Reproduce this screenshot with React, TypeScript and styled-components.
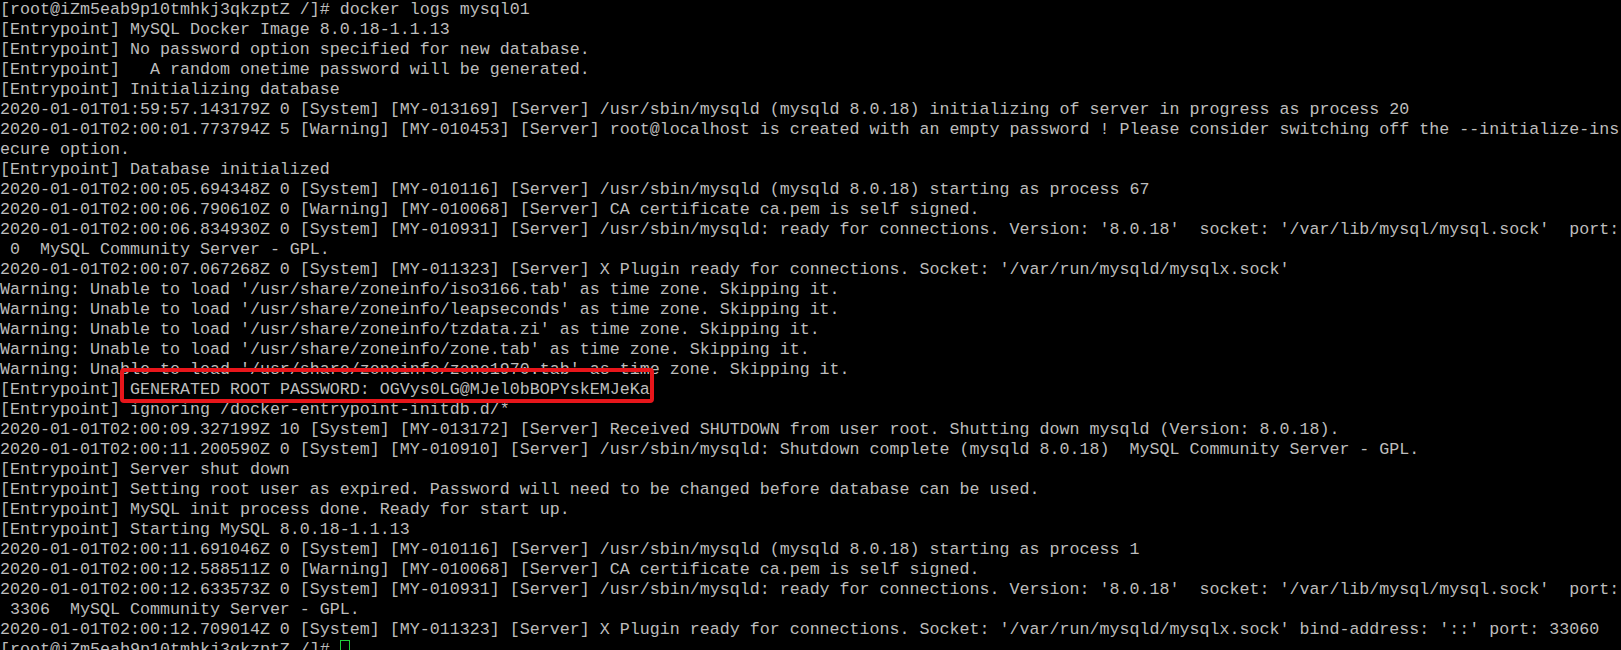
import React from "react";
import styled, { createGlobalStyle } from "styled-components";

const Global = createGlobalStyle`
  html, body { margin: 0; padding: 0; background: #000; }
  body { overflow: hidden; }
`;

const Terminal = styled.div`
  width: 1621px;
  height: 650px;
  overflow: hidden;
  background: #000;
  color: #bdbdbd;
  font-family: "Liberation Mono", "Courier New", monospace;
  font-size: 16.664px;
  line-height: 20px;
  display: flex;
  flex-direction: column;
`;

const Line = styled.div`
  height: 20px;
  flex: 0 0 20px;
  white-space: pre;
`;

const Highlight = styled.span`
  position: relative;
  &::before {
    content: "";
    position: absolute;
    left: -10px;
    right: -4px;
    top: -12px;
    bottom: -4px;
    border: 4px solid #e8161b;
    border-radius: 4px;
    pointer-events: none;
  }
`;

const Cursor = styled.span`
  display: inline-block;
  width: 8px;
  height: 16px;
  border: 1px solid #1fcf3a;
  vertical-align: top;
`;

const lines: string[] = [
  "[root@iZm5eab9p10tmhkj3qkzptZ /]# docker logs mysql01",
  "[Entrypoint] MySQL Docker Image 8.0.18-1.1.13",
  "[Entrypoint] No password option specified for new database.",
  "[Entrypoint]   A random onetime password will be generated.",
  "[Entrypoint] Initializing database",
  "2020-01-01T01:59:57.143179Z 0 [System] [MY-013169] [Server] /usr/sbin/mysqld (mysqld 8.0.18) initializing of server in progress as process 20",
  "2020-01-01T02:00:01.773794Z 5 [Warning] [MY-010453] [Server] root@localhost is created with an empty password ! Please consider switching off the --initialize-ins",
  "ecure option.",
  "[Entrypoint] Database initialized",
  "2020-01-01T02:00:05.694348Z 0 [System] [MY-010116] [Server] /usr/sbin/mysqld (mysqld 8.0.18) starting as process 67",
  "2020-01-01T02:00:06.790610Z 0 [Warning] [MY-010068] [Server] CA certificate ca.pem is self signed.",
  "2020-01-01T02:00:06.834930Z 0 [System] [MY-010931] [Server] /usr/sbin/mysqld: ready for connections. Version: '8.0.18'  socket: '/var/lib/mysql/mysql.sock'  port:",
  " 0  MySQL Community Server - GPL.",
  "2020-01-01T02:00:07.067268Z 0 [System] [MY-011323] [Server] X Plugin ready for connections. Socket: '/var/run/mysqld/mysqlx.sock'",
  "Warning: Unable to load '/usr/share/zoneinfo/iso3166.tab' as time zone. Skipping it.",
  "Warning: Unable to load '/usr/share/zoneinfo/leapseconds' as time zone. Skipping it.",
  "Warning: Unable to load '/usr/share/zoneinfo/tzdata.zi' as time zone. Skipping it.",
  "Warning: Unable to load '/usr/share/zoneinfo/zone.tab' as time zone. Skipping it.",
  "Warning: Unable to load '/usr/share/zoneinfo/zone1970.tab' as time zone. Skipping it.",
  "__PASSWORD__",
  "[Entrypoint] ignoring /docker-entrypoint-initdb.d/*",
  "2020-01-01T02:00:09.327199Z 10 [System] [MY-013172] [Server] Received SHUTDOWN from user root. Shutting down mysqld (Version: 8.0.18).",
  "2020-01-01T02:00:11.200590Z 0 [System] [MY-010910] [Server] /usr/sbin/mysqld: Shutdown complete (mysqld 8.0.18)  MySQL Community Server - GPL.",
  "[Entrypoint] Server shut down",
  "[Entrypoint] Setting root user as expired. Password will need to be changed before database can be used.",
  "[Entrypoint] MySQL init process done. Ready for start up.",
  "[Entrypoint] Starting MySQL 8.0.18-1.1.13",
  "2020-01-01T02:00:11.691046Z 0 [System] [MY-010116] [Server] /usr/sbin/mysqld (mysqld 8.0.18) starting as process 1",
  "2020-01-01T02:00:12.588511Z 0 [Warning] [MY-010068] [Server] CA certificate ca.pem is self signed.",
  "2020-01-01T02:00:12.633573Z 0 [System] [MY-010931] [Server] /usr/sbin/mysqld: ready for connections. Version: '8.0.18'  socket: '/var/lib/mysql/mysql.sock'  port:",
  " 3306  MySQL Community Server - GPL.",
  "2020-01-01T02:00:12.709014Z 0 [System] [MY-011323] [Server] X Plugin ready for connections. Socket: '/var/run/mysqld/mysqlx.sock' bind-address: '::' port: 33060",
];

export default function App() {
  return (
    <>
      <Global />
      <Terminal>
        {lines.map((l, i) =>
          l === "__PASSWORD__" ? (
            <Line key={i}>
              {"[Entrypoint] "}
              <Highlight>GENERATED ROOT PASSWORD: OGVys0LG@MJel0bBOPYskEMJeKa</Highlight>
            </Line>
          ) : (
            <Line key={i}>{l}</Line>
          )
        )}
        <Line>
          {"[root@iZm5eab9p10tmhkj3qkzptZ /]# "}
          <Cursor />
        </Line>
      </Terminal>
    </>
  );
}
